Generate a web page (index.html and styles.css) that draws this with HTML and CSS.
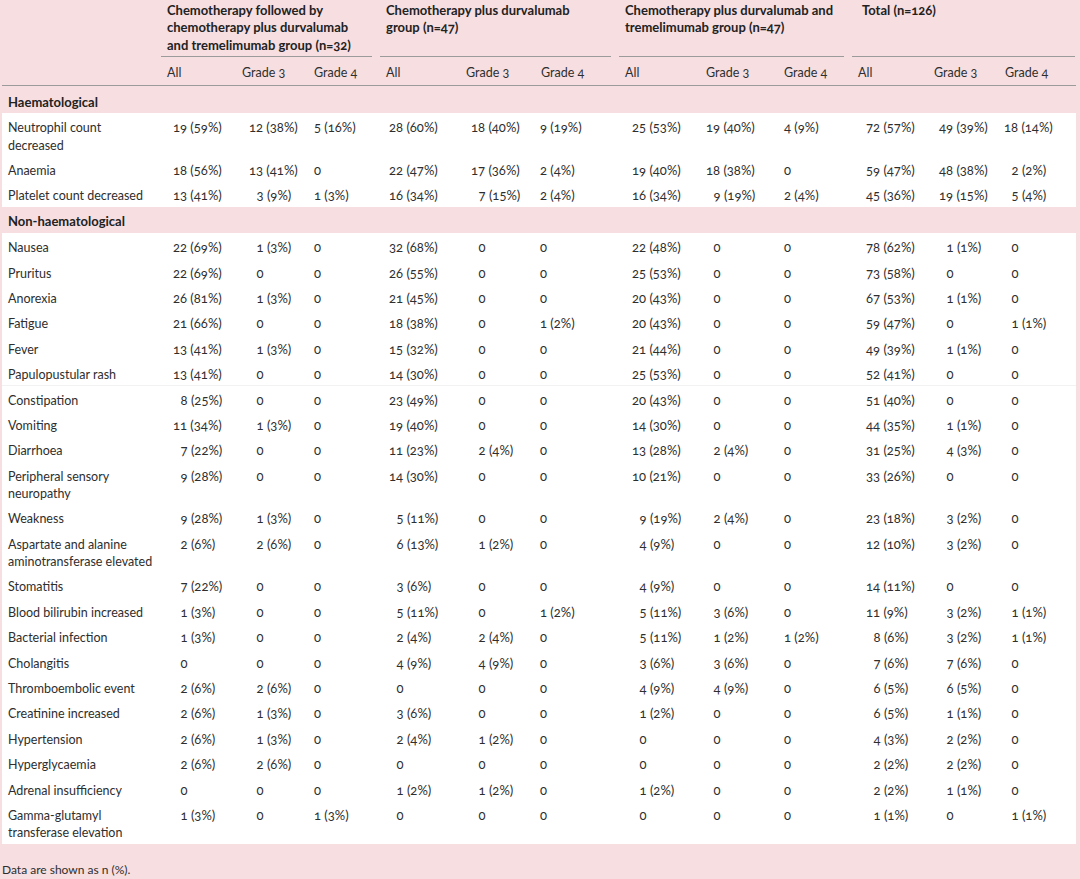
FILE: index.html
```html
<!DOCTYPE html>
<html lang="en">
<head>
<meta charset="utf-8">
<title>Adverse events</title>
<link rel="stylesheet" href="styles.css">
</head>
<body>
<div class="page">
<table class="ae">
<colgroup>
<col class="w-label">
<col class="w75"><col class="w72"><col class="w72">
<col class="w80"><col class="w75"><col class="w84">
<col class="w81"><col class="w78"><col class="w74">
<col class="w76"><col class="w71"><col class="w77">
</colgroup>
<thead>
<tr class="groups">
<th></th>
<th colspan="3">Chemotherapy followed by<br>chemotherapy plus durvalumab<br>and tremelimumab group (n=32)</th>
<th colspan="3">Chemotherapy plus durvalumab<br>group (n=47)</th>
<th colspan="3">Chemotherapy plus durvalumab and<br>tremelimumab group (n=47)</th>
<th colspan="3" class="last">Total (n=126)</th>
</tr>
<tr class="grades">
<th></th>
<th>All</th><th>Grade 3</th><th>Grade 4</th>
<th>All</th><th>Grade 3</th><th>Grade 4</th>
<th>All</th><th>Grade 3</th><th>Grade 4</th>
<th>All</th><th>Grade 3</th><th>Grade 4</th>
</tr>
</thead>
<tbody class="section first">
<tr><th colspan="13">Haematological</th></tr>
</tbody>
<tbody class="block">
<tr><th scope="row">Neutrophil count<br>decreased</th><td>19 (59%)</td><td>12 (38%)</td><td>5 (16%)</td><td>28 (60%)</td><td>18 (40%)</td><td>9 (19%)</td><td>25 (53%)</td><td>19 (40%)</td><td>4 (9%)</td><td>72 (57%)</td><td>49 (39%)</td><td>18 (14%)</td></tr>
<tr><th scope="row">Anaemia</th><td>18 (56%)</td><td>13 (41%)</td><td>0</td><td>22 (47%)</td><td>17 (36%)</td><td>2 (4%)</td><td>19 (40%)</td><td>18 (38%)</td><td>0</td><td>59 (47%)</td><td>48 (38%)</td><td>&#8199;2 (2%)</td></tr>
<tr><th scope="row">Platelet count decreased</th><td>13 (41%)</td><td>&#8199;3 (9%)</td><td>1 (3%)</td><td>16 (34%)</td><td>&#8199;7 (15%)</td><td>2 (4%)</td><td>16 (34%)</td><td>&#8199;9 (19%)</td><td>2 (4%)</td><td>45 (36%)</td><td>19 (15%)</td><td>&#8199;5 (4%)</td></tr>
</tbody>
<tbody class="section">
<tr><th colspan="13">Non-haematological</th></tr>
</tbody>
<tbody class="block">
<tr><th scope="row">Nausea</th><td>22 (69%)</td><td>&#8199;1 (3%)</td><td>0</td><td>32 (68%)</td><td>&#8199;0</td><td>0</td><td>22 (48%)</td><td>&#8199;0</td><td>0</td><td>78 (62%)</td><td>&#8199;1 (1%)</td><td>&#8199;0</td></tr>
<tr><th scope="row">Pruritus</th><td>22 (69%)</td><td>&#8199;0</td><td>0</td><td>26 (55%)</td><td>&#8199;0</td><td>0</td><td>25 (53%)</td><td>&#8199;0</td><td>0</td><td>73 (58%)</td><td>&#8199;0</td><td>&#8199;0</td></tr>
<tr><th scope="row">Anorexia</th><td>26 (81%)</td><td>&#8199;1 (3%)</td><td>0</td><td>21 (45%)</td><td>&#8199;0</td><td>0</td><td>20 (43%)</td><td>&#8199;0</td><td>0</td><td>67 (53%)</td><td>&#8199;1 (1%)</td><td>&#8199;0</td></tr>
<tr><th scope="row">Fatigue</th><td>21 (66%)</td><td>&#8199;0</td><td>0</td><td>18 (38%)</td><td>&#8199;0</td><td>1 (2%)</td><td>20 (43%)</td><td>&#8199;0</td><td>0</td><td>59 (47%)</td><td>&#8199;0</td><td>&#8199;1 (1%)</td></tr>
<tr><th scope="row">Fever</th><td>13 (41%)</td><td>&#8199;1 (3%)</td><td>0</td><td>15 (32%)</td><td>&#8199;0</td><td>0</td><td>21 (44%)</td><td>&#8199;0</td><td>0</td><td>49 (39%)</td><td>&#8199;1 (1%)</td><td>&#8199;0</td></tr>
<tr><th scope="row">Papulopustular rash</th><td>13 (41%)</td><td>&#8199;0</td><td>0</td><td>14 (30%)</td><td>&#8199;0</td><td>0</td><td>25 (53%)</td><td>&#8199;0</td><td>0</td><td>52 (41%)</td><td>&#8199;0</td><td>&#8199;0</td></tr>
<tr class="seam"><th scope="row">Constipation</th><td>&#8199;8 (25%)</td><td>&#8199;0</td><td>0</td><td>23 (49%)</td><td>&#8199;0</td><td>0</td><td>20 (43%)</td><td>&#8199;0</td><td>0</td><td>51 (40%)</td><td>&#8199;0</td><td>&#8199;0</td></tr>
<tr><th scope="row">Vomiting</th><td>11 (34%)</td><td>&#8199;1 (3%)</td><td>0</td><td>19 (40%)</td><td>&#8199;0</td><td>0</td><td>14 (30%)</td><td>&#8199;0</td><td>0</td><td>44 (35%)</td><td>&#8199;1 (1%)</td><td>&#8199;0</td></tr>
<tr><th scope="row">Diarrhoea</th><td>&#8199;7 (22%)</td><td>&#8199;0</td><td>0</td><td>11 (23%)</td><td>&#8199;2 (4%)</td><td>0</td><td>13 (28%)</td><td>&#8199;2 (4%)</td><td>0</td><td>31 (25%)</td><td>&#8199;4 (3%)</td><td>&#8199;0</td></tr>
<tr><th scope="row">Peripheral sensory<br>neuropathy</th><td>&#8199;9 (28%)</td><td>&#8199;0</td><td>0</td><td>14 (30%)</td><td>&#8199;0</td><td>0</td><td>10 (21%)</td><td>&#8199;0</td><td>0</td><td>33 (26%)</td><td>&#8199;0</td><td>&#8199;0</td></tr>
<tr><th scope="row">Weakness</th><td>&#8199;9 (28%)</td><td>&#8199;1 (3%)</td><td>0</td><td>&#8199;5 (11%)</td><td>&#8199;0</td><td>0</td><td>&#8199;9 (19%)</td><td>&#8199;2 (4%)</td><td>0</td><td>23 (18%)</td><td>&#8199;3 (2%)</td><td>&#8199;0</td></tr>
<tr><th scope="row">Aspartate and alanine<br>aminotransferase elevated</th><td>&#8199;2 (6%)</td><td>&#8199;2 (6%)</td><td>0</td><td>&#8199;6 (13%)</td><td>&#8199;1 (2%)</td><td>0</td><td>&#8199;4 (9%)</td><td>&#8199;0</td><td>0</td><td>12 (10%)</td><td>&#8199;3 (2%)</td><td>&#8199;0</td></tr>
<tr><th scope="row">Stomatitis</th><td>&#8199;7 (22%)</td><td>&#8199;0</td><td>0</td><td>&#8199;3 (6%)</td><td>&#8199;0</td><td>0</td><td>&#8199;4 (9%)</td><td>&#8199;0</td><td>0</td><td>14 (11%)</td><td>&#8199;0</td><td>&#8199;0</td></tr>
<tr><th scope="row">Blood bilirubin increased</th><td>&#8199;1 (3%)</td><td>&#8199;0</td><td>0</td><td>&#8199;5 (11%)</td><td>&#8199;0</td><td>1 (2%)</td><td>&#8199;5 (11%)</td><td>&#8199;3 (6%)</td><td>0</td><td>11 (9%)</td><td>&#8199;3 (2%)</td><td>&#8199;1 (1%)</td></tr>
<tr><th scope="row">Bacterial infection</th><td>&#8199;1 (3%)</td><td>&#8199;0</td><td>0</td><td>&#8199;2 (4%)</td><td>&#8199;2 (4%)</td><td>0</td><td>&#8199;5 (11%)</td><td>&#8199;1 (2%)</td><td>1 (2%)</td><td>&#8199;8 (6%)</td><td>&#8199;3 (2%)</td><td>&#8199;1 (1%)</td></tr>
<tr><th scope="row">Cholangitis</th><td>&#8199;0</td><td>&#8199;0</td><td>0</td><td>&#8199;4 (9%)</td><td>&#8199;4 (9%)</td><td>0</td><td>&#8199;3 (6%)</td><td>&#8199;3 (6%)</td><td>0</td><td>&#8199;7 (6%)</td><td>&#8199;7 (6%)</td><td>&#8199;0</td></tr>
<tr><th scope="row">Thromboembolic event</th><td>&#8199;2 (6%)</td><td>&#8199;2 (6%)</td><td>0</td><td>&#8199;0</td><td>&#8199;0</td><td>0</td><td>&#8199;4 (9%)</td><td>&#8199;4 (9%)</td><td>0</td><td>&#8199;6 (5%)</td><td>&#8199;6 (5%)</td><td>&#8199;0</td></tr>
<tr><th scope="row">Creatinine increased</th><td>&#8199;2 (6%)</td><td>&#8199;1 (3%)</td><td>0</td><td>&#8199;3 (6%)</td><td>&#8199;0</td><td>0</td><td>&#8199;1 (2%)</td><td>&#8199;0</td><td>0</td><td>&#8199;6 (5%)</td><td>&#8199;1 (1%)</td><td>&#8199;0</td></tr>
<tr><th scope="row">Hypertension</th><td>&#8199;2 (6%)</td><td>&#8199;1 (3%)</td><td>0</td><td>&#8199;2 (4%)</td><td>&#8199;1 (2%)</td><td>0</td><td>&#8199;0</td><td>&#8199;0</td><td>0</td><td>&#8199;4 (3%)</td><td>&#8199;2 (2%)</td><td>&#8199;0</td></tr>
<tr><th scope="row">Hyperglycaemia</th><td>&#8199;2 (6%)</td><td>&#8199;2 (6%)</td><td>0</td><td>&#8199;0</td><td>&#8199;0</td><td>0</td><td>&#8199;0</td><td>&#8199;0</td><td>0</td><td>&#8199;2 (2%)</td><td>&#8199;2 (2%)</td><td>&#8199;0</td></tr>
<tr><th scope="row">Adrenal insufficiency</th><td>&#8199;0</td><td>&#8199;0</td><td>0</td><td>&#8199;1 (2%)</td><td>&#8199;1 (2%)</td><td>0</td><td>&#8199;1 (2%)</td><td>&#8199;0</td><td>0</td><td>&#8199;2 (2%)</td><td>&#8199;1 (1%)</td><td>&#8199;0</td></tr>
<tr><th scope="row">Gamma-glutamyl<br>transferase elevation</th><td>&#8199;1 (3%)</td><td>&#8199;0</td><td>1 (3%)</td><td>&#8199;0</td><td>&#8199;0</td><td>0</td><td>&#8199;0</td><td>&#8199;0</td><td>0</td><td>&#8199;1 (1%)</td><td>&#8199;0</td><td>&#8199;1 (1%)</td></tr>
</tbody>
</table>
<p class="note">Data are shown as n (%).</p>
</div>
</body>
</html>
```

FILE: styles.css
```css
html, body {
  margin: 0;
  background: #f6dee1;
}

body {
  font-family: Lato, "Open Sans", "Liberation Sans", sans-serif;
  font-size: 13px;
  line-height: 17.3px;
  color: #2e2e2e;
  font-variant-numeric: oldstyle-nums;
}

.page {
  padding: 0 4px 0 2px;
}

.ae {
  border-collapse: collapse;
  table-layout: fixed;
  width: 1074px;
}

.w-label { width: 159px; }
.w71 { width: 71px; }
.w72 { width: 72px; }
.w74 { width: 74px; }
.w75 { width: 75px; }
.w76 { width: 76px; }
.w77 { width: 77px; }
.w78 { width: 78px; }
.w80 { width: 80px; }
.w81 { width: 81px; }
.w84 { width: 84px; }

.ae th,
.ae td {
  text-align: left;
  vertical-align: top;
  font-weight: 400;
  white-space: nowrap;
  padding: 6.1px 2px 2px 6px;
}

.groups th {
  font-weight: 700;
  color: #222;
  padding: 2px 0 3.1px 6px;
  background: linear-gradient(#9b9b9b, #9b9b9b) left bottom / calc(100% - 8px) 1px no-repeat;
}

.groups th:first-child {
  background: none;
}

.groups th.last {
  padding-left: 10px;
  background-size: calc(100% - 1px) 1px;
}

.grades th {
  font-size: 12.5px;
  padding: 7.3px 2px 3.4px 6px;
  border-bottom: 1px solid #9b9b9b;
}

.section th {
  font-weight: 700;
  color: #222;
  padding: 6.6px 6px 2.5px;
}

.section.first th {
  padding-top: 8.2px;
  padding-bottom: 1.8px;
}

.block th {
  font-size: 12.5px;
}

.block th,
.block td {
  background: #fff;
}

.block .seam th,
.block .seam td {
  box-shadow: inset 0 1px 0 #f3f1f1;
}

.block td:nth-child(2) { padding-left: 12px; }
.block td:nth-child(3) { padding-left: 13px; }
.block td:nth-child(4) { padding-left: 6px; }
.block td:nth-child(5) { padding-left: 9px; }
.block td:nth-child(6) { padding-left: 11px; }
.block td:nth-child(7) { padding-left: 5px; }
.block td:nth-child(8) { padding-left: 13px; }
.block td:nth-child(9) { padding-left: 6px; }
.block td:nth-child(10) { padding-left: 6px; }
.block td:nth-child(11) { padding-left: 14px; }
.block td:nth-child(12) { padding-left: 11px; }
.block td:nth-child(13) { padding-left: 5px; }

.note {
  font-size: 12px;
  margin: 17px 0 0;
  padding-left: 0;
}
```
